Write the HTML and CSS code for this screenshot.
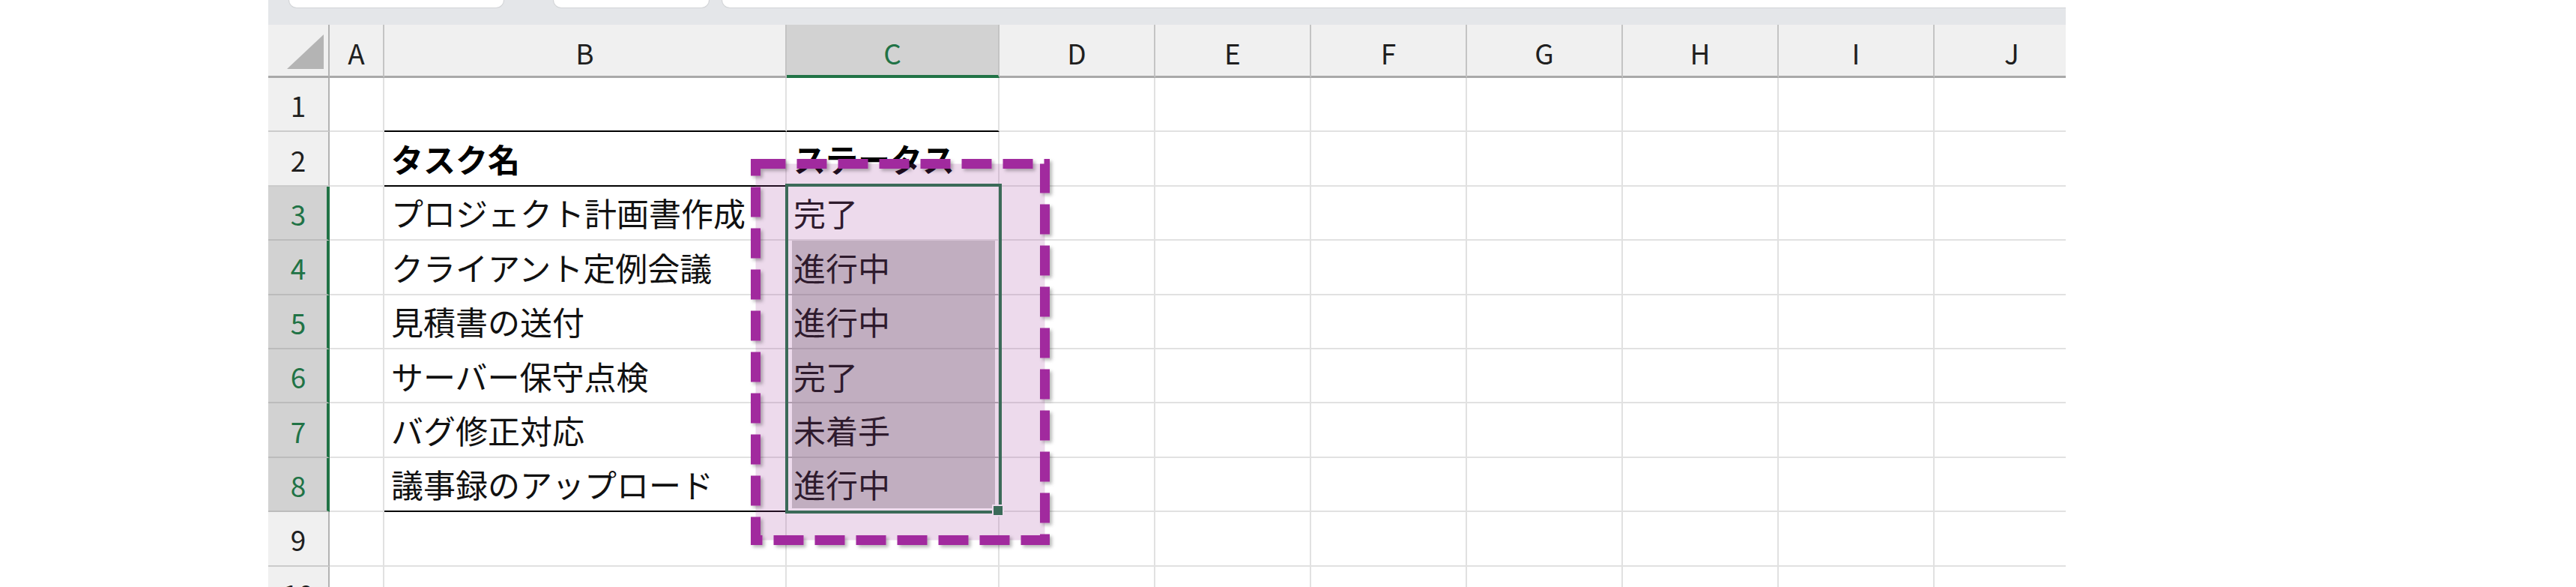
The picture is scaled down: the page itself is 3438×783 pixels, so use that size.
FILE: index.html
```html
<!DOCTYPE html>
<html lang="ja">
<head>
<meta charset="utf-8">
<title>Sheet</title>
<link rel="stylesheet" href="styles.css">
</head>
<body>
<div class="sheet">
  <div class="tabbar">
    <div class="tab t1"></div>
    <div class="tab t2"></div>
    <div class="tab t3"></div>
  </div>
  <div class="grid">
    <div class="corner"><svg class="corner-svg" viewBox="0 0 80 71" width="80" height="71"><polygon class="tri" points="25,60 74,60 74,14"/></svg></div>
    <div class="ch">A</div><div class="ch">B</div><div class="ch sel">C</div><div class="ch">D</div><div class="ch">E</div><div class="ch">F</div><div class="ch">G</div><div class="ch">H</div><div class="ch">I</div><div class="ch">J</div>

    <div class="rh">1</div><div class="c"></div><div class="c bb"></div><div class="c bb"></div><div class="c"></div><div class="c"></div><div class="c"></div><div class="c"></div><div class="c"></div><div class="c"></div><div class="c"></div>

    <div class="rh">2</div><div class="c"></div><div class="c bb hd">タスク名</div><div class="c bb hd">ステータス</div><div class="c"></div><div class="c"></div><div class="c"></div><div class="c"></div><div class="c"></div><div class="c"></div><div class="c"></div>

    <div class="rh sel">3</div><div class="c"></div><div class="c">プロジェクト計画書作成</div><div class="c">完了</div><div class="c"></div><div class="c"></div><div class="c"></div><div class="c"></div><div class="c"></div><div class="c"></div><div class="c"></div>

    <div class="rh sel">4</div><div class="c"></div><div class="c">クライアント定例会議</div><div class="c shade">進行中</div><div class="c"></div><div class="c"></div><div class="c"></div><div class="c"></div><div class="c"></div><div class="c"></div><div class="c"></div>

    <div class="rh sel">5</div><div class="c"></div><div class="c">見積書の送付</div><div class="c shade">進行中</div><div class="c"></div><div class="c"></div><div class="c"></div><div class="c"></div><div class="c"></div><div class="c"></div><div class="c"></div>

    <div class="rh sel">6</div><div class="c"></div><div class="c">サーバー保守点検</div><div class="c shade">完了</div><div class="c"></div><div class="c"></div><div class="c"></div><div class="c"></div><div class="c"></div><div class="c"></div><div class="c"></div>

    <div class="rh sel">7</div><div class="c"></div><div class="c">バグ修正対応</div><div class="c shade">未着手</div><div class="c"></div><div class="c"></div><div class="c"></div><div class="c"></div><div class="c"></div><div class="c"></div><div class="c"></div>

    <div class="rh sel">8</div><div class="c"></div><div class="c bb">議事録のアップロード</div><div class="c bb shade last">進行中</div><div class="c"></div><div class="c"></div><div class="c"></div><div class="c"></div><div class="c"></div><div class="c"></div><div class="c"></div>

    <div class="rh">9</div><div class="c"></div><div class="c"></div><div class="c"></div><div class="c"></div><div class="c"></div><div class="c"></div><div class="c"></div><div class="c"></div><div class="c"></div><div class="c"></div>

    <div class="rh">10</div><div class="c"></div><div class="c"></div><div class="c"></div><div class="c"></div><div class="c"></div><div class="c"></div><div class="c"></div><div class="c"></div><div class="c"></div><div class="c"></div>
  </div>

  <div class="selection"></div>
  <div class="handle"></div>

  <svg class="callout" width="399" height="515" viewBox="0 0 399 515">
    <defs>
      <filter id="dashShadow" x="-5%" y="-5%" width="115%" height="115%">
        <feDropShadow dx="3" dy="3" stdDeviation="2" flood-color="#000" flood-opacity="0.28"/>
      </filter>
    </defs>
    <rect class="callout-fill" x="6.5" y="6.5" width="386" height="502"/>
    <rect class="callout-stroke" x="6.5" y="6.5" width="386" height="502" filter="url(#dashShadow)"/>
  </svg>
</div>
</body>
</html>
```

FILE: styles.css
```css
html, body {
  margin: 0;
  padding: 0;
  background: #ffffff;
  height: 783px;
  overflow: hidden;
}

body {
  font-family: "Noto Sans CJK JP", "Noto Sans", sans-serif;
}

.sheet {
  position: relative;
  margin-left: 358px;
  width: 2399px;
  height: 783px;
  overflow: hidden;
  display: flex;
  flex-direction: column;
}

.tabbar {
  height: 33px;
  flex: 0 0 33px;
  background: #e4e6e9;
  display: flex;
  align-items: flex-start;
  padding-left: 27px;
  gap: 0;
  box-sizing: border-box;
}

.tab {
  height: 11px;
  background: #ffffff;
  border: 1px solid #d2d4d7;
  border-top: none;
  border-radius: 0 0 11px 11px;
  box-sizing: border-box;
}

.t1 { width: 288px; }
.t2 { width: 209px; margin-left: 65px; }
.t3 { flex: 1; margin-left: 16px; margin-right: -20px; }

.grid {
  display: grid;
  grid-template-columns: 82px 73px 537px 284px repeat(7, 208px);
  grid-template-rows: 71px;
  grid-auto-rows: 72.4px;
}

.grid > div {
  box-sizing: border-box;
  display: flex;
  align-items: center;
  white-space: nowrap;
  min-width: 0;
}

.corner {
  background: #f0f0f0;
  border-right: 2px solid #b3b3b3;
  border-bottom: 3px solid #a9a9a9;
}

.corner-svg {
  display: block;
}

.tri {
  fill: #b4b4b4;
}

.ch {
  background: #f0f0f0;
  border-right: 2px solid #c4c4c4;
  border-bottom: 3px solid #a9a9a9;
  justify-content: center;
  font-family: "Liberation Sans Narrow", "Noto Sans CJK JP", sans-serif;
  font-size: 37px;
  color: #1f1f1f;
  padding-top: 6px;
}

.ch.sel {
  background: #d2d2d2;
  color: #217346;
  border-bottom: 4px solid #217346;
}

.rh {
  background: #f0f0f0;
  border-right: 2px solid #b3b3b3;
  border-bottom: 2px solid #cbcbcb;
  justify-content: center;
  font-family: "Liberation Sans Narrow", "Noto Sans CJK JP", sans-serif;
  font-size: 37px;
  color: #1f1f1f;
  padding-top: 2px;
}

.rh.sel {
  background: #d2d2d2;
  color: #217346;
  border-right: 4px solid #217346;
  border-bottom-color: #bcbcbc;
  padding-left: 2px;
}

.c {
  border-right: 2px solid #e1e1e1;
  border-bottom: 2px solid #e1e1e1;
  padding-left: 9px;
  font-family: "Noto Sans CJK JP", "Noto Sans", sans-serif;
  font-size: 43px;
  color: #111111;
  line-height: 1;
}

.c.bb {
  border-bottom: 2px solid #000000;
}

.c.hd {
  font-weight: 700;
  color: #000000;
}

.c.shade {
  background: #c9c9c9;
  border-bottom-color: #b2b2b2;
  box-shadow: inset 7px 0 0 #ffffff, inset -4px 0 0 #ffffff;
}

.c.shade.last {
  border-bottom-color: #000000;
  box-shadow: inset 7px 0 0 #ffffff, inset -4px 0 0 #ffffff, inset 0 -3px 0 #ffffff;
}

.selection {
  position: absolute;
  left: 690px;
  top: 245px;
  width: 289px;
  height: 440px;
  border: 4px solid #217346;
  box-sizing: border-box;
}

.handle {
  position: absolute;
  left: 966px;
  top: 673px;
  width: 12px;
  height: 12px;
  background: #217346;
  border: 2px solid #ffffff;
}

.callout {
  position: absolute;
  left: 644px;
  top: 212px;
  overflow: visible;
}

.callout-fill {
  fill: rgba(165, 70, 160, 0.2);
}

.callout-stroke {
  fill: none;
  stroke: #a12a9e;
  stroke-width: 13;
  stroke-dasharray: 40 15;
}
```
